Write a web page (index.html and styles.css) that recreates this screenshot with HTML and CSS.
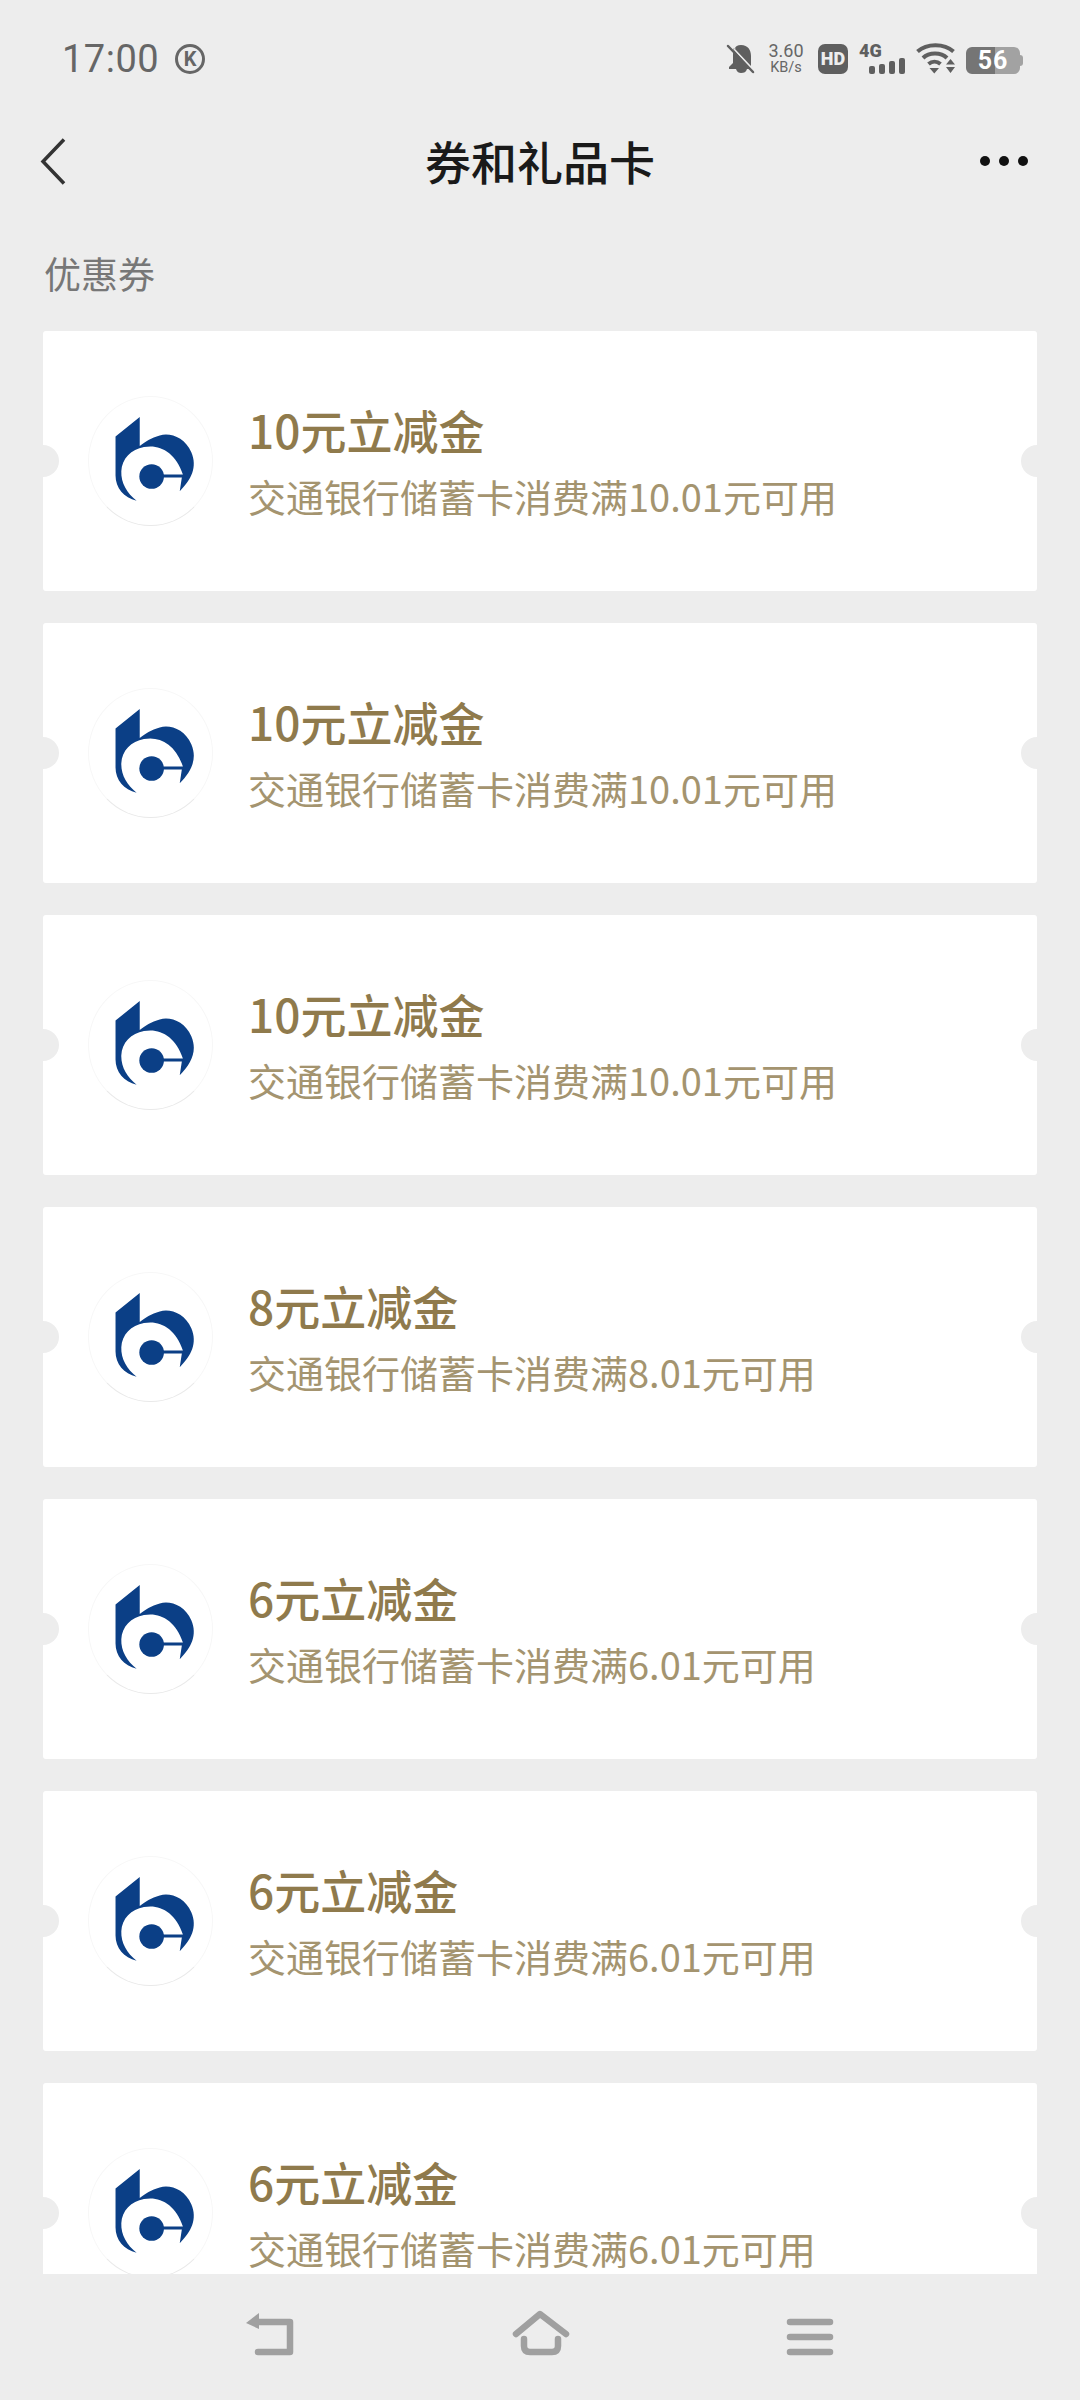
FILE: index.html
```html
<!DOCTYPE html>
<html lang="zh-CN">
<head>
    <meta charset="UTF-8">
    <title>券和礼品卡</title>
    <link rel="stylesheet" href="styles.css">
</head>
<body>
<svg class="defs" width="0" height="0">
    <symbol id="bankLogo" viewBox="0 0 95 95">
        <path fill="#0b3f86" d="M33 10.500 L10 29 V66 C10 78 18 87 30 90 C21 83 15 73 15.500 62 C16 50 25 41 37 39 C52 36 67 44 74 65 H50 V68 H73 L71 81 C82 70 88 58 82 44 C76 30 62 25 52 28 C44 30 38 34 33 38 Z"/>
        <circle fill="#0b3f86" cx="44.300" cy="67" r="11.700"/>
    </symbol>
</svg>

<div class="page">
    <!-- Status bar -->
    <div class="status-bar">
        <span class="time">17:00</span>
        <span class="k-badge">K</span>
        <div class="status-icons">
            <svg class="icon-bell" width="30" height="30" viewBox="0 0 30 30">
                <path fill="#5f5f5f" d="M15 1 C8 1 7 7 7 12 V19 L3 23 V25 H10 C11 28 13 29 15 29 C18 29 20 28 21 25 H25 L7 5 Z M9 5 L25 22 V12 C25 6 22 1 15 1 C12 1 10 3 9 5 Z"/>
                <path stroke="#5f5f5f" stroke-width="2.500" stroke-linecap="round" d="M2 2 L27 28"/>
            </svg>
            <div class="net-speed">
                <span class="speed-value">3.60</span>
                <span class="speed-unit">KB/s</span>
            </div>
            <span class="hd-badge">HD</span>
            <div class="signal">
                <span class="signal-label">4G</span>
                <div class="signal-bars">
                    <i class="bar-1"></i><i class="bar-2"></i><i class="bar-3"></i><i class="bar-4"></i>
                </div>
            </div>
            <svg class="icon-wifi" width="41" height="31" viewBox="0 0 41 31">
                <g fill="none" stroke="#5f5f5f" stroke-width="4">
                    <path d="M1.500 8.500 C11 0 28 0 37.500 8.500"/>
                    <path d="M7 15 C13 9 25 9 31 15"/>
                    <path d="M12.500 21 C16 18 21 18 24.500 21"/>
                </g>
                <path fill="#5f5f5f" d="M13.500 25 H23 L18.300 30.500 Z M30 21.500 L34.500 16 L39 21.500 Z M30 24 H39 L34.500 30 Z"/>
            </svg>
            <div class="battery">
                <span class="battery-level">56</span>
            </div>
        </div>
    </div>

    <!-- Title bar -->
    <div class="title-bar">
        <svg class="icon-back" width="26" height="47" viewBox="0 0 26 47">
            <path fill="none" stroke="#333" stroke-width="3.500" d="M24 1.500 L3 23.500 L24 45.500"/>
        </svg>
        <h1 class="title">券和礼品卡</h1>
        <div class="more"><i></i><i></i><i></i></div>
    </div>

    <div class="section-label">优惠券</div>

    <!-- Coupons -->
    <div class="coupon-list">
        <div class="coupon">
            <div class="coupon-logo"><svg class="logo-mark"><use href="#bankLogo"/></svg></div>
            <div class="coupon-text">
                <div class="coupon-name">10元立减金</div>
                <div class="coupon-desc">交通银行储蓄卡消费满10.01元可用</div>
            </div>
        </div>
        <div class="coupon">
            <div class="coupon-logo"><svg class="logo-mark"><use href="#bankLogo"/></svg></div>
            <div class="coupon-text">
                <div class="coupon-name">10元立减金</div>
                <div class="coupon-desc">交通银行储蓄卡消费满10.01元可用</div>
            </div>
        </div>
        <div class="coupon">
            <div class="coupon-logo"><svg class="logo-mark"><use href="#bankLogo"/></svg></div>
            <div class="coupon-text">
                <div class="coupon-name">10元立减金</div>
                <div class="coupon-desc">交通银行储蓄卡消费满10.01元可用</div>
            </div>
        </div>
        <div class="coupon">
            <div class="coupon-logo"><svg class="logo-mark"><use href="#bankLogo"/></svg></div>
            <div class="coupon-text">
                <div class="coupon-name">8元立减金</div>
                <div class="coupon-desc">交通银行储蓄卡消费满8.01元可用</div>
            </div>
        </div>
        <div class="coupon">
            <div class="coupon-logo"><svg class="logo-mark"><use href="#bankLogo"/></svg></div>
            <div class="coupon-text">
                <div class="coupon-name">6元立减金</div>
                <div class="coupon-desc">交通银行储蓄卡消费满6.01元可用</div>
            </div>
        </div>
        <div class="coupon">
            <div class="coupon-logo"><svg class="logo-mark"><use href="#bankLogo"/></svg></div>
            <div class="coupon-text">
                <div class="coupon-name">6元立减金</div>
                <div class="coupon-desc">交通银行储蓄卡消费满6.01元可用</div>
            </div>
        </div>
        <div class="coupon">
            <div class="coupon-logo"><svg class="logo-mark"><use href="#bankLogo"/></svg></div>
            <div class="coupon-text">
                <div class="coupon-name">6元立减金</div>
                <div class="coupon-desc">交通银行储蓄卡消费满6.01元可用</div>
            </div>
        </div>
    </div>

    <!-- Navigation bar -->
    <div class="nav-bar">
        <svg width="54" height="50" viewBox="0 0 54 50">
            <path fill="#a0a0a0" d="M3 15 L16 5 V21 Z"/>
            <path fill="none" stroke="#a0a0a0" stroke-width="6.500" stroke-linecap="round" stroke-linejoin="round" d="M14 14 H47 V44 H15"/>
        </svg>
        <svg width="64" height="50" viewBox="0 0 64 50">
            <path fill="none" stroke="#a0a0a0" stroke-width="6.500" stroke-linecap="round" stroke-linejoin="round" d="M7 26 L31 6 L57 26"/>
            <path fill="none" stroke="#a0a0a0" stroke-width="6.500" stroke-linecap="round" stroke-linejoin="round" d="M15 31 V38 Q15 44 21 44 H43 Q49 44 49 38 V31"/>
        </svg>
        <svg width="50" height="50" viewBox="0 0 50 50">
            <g fill="none" stroke="#a0a0a0" stroke-width="6.500" stroke-linecap="round">
                <path d="M5 14 H45"/>
                <path d="M5 29 H45"/>
                <path d="M5 44 H45"/>
            </g>
        </svg>
    </div>
</div>
</body>
</html>
```

FILE: styles.css
```css
* {
    box-sizing: border-box;
}

body {
    margin: 0;
    background: #ededed;
    font-family: "Noto Sans CJK SC", "Noto Sans", sans-serif;
}

.defs {
    display: block;
    height: 0;
}

.page {
    width: 1080px;
    height: 2400px;
    display: flex;
    flex-direction: column;
    overflow: hidden;
}

/* Status bar */
.status-bar {
    height: 119px;
    padding: 0 60px 2px 62px;
    display: flex;
    align-items: center;
    color: #666;
}

.time {
    font-family: Roboto, sans-serif;
    font-size: 38px;
    letter-spacing: 0.5px;
}

.k-badge {
    width: 30px;
    height: 30px;
    margin-left: 16px;
    border: 3.5px solid #666;
    border-radius: 50%;
    display: flex;
    align-items: center;
    justify-content: center;
    font-family: Roboto, sans-serif;
    font-size: 20px;
    font-weight: 700;
    line-height: 1;
}

.status-icons {
    margin-left: auto;
    display: flex;
    align-items: center;
}

.net-speed {
    width: 40px;
    margin-left: 10px;
    display: flex;
    flex-direction: column;
    align-items: center;
    font-family: Roboto, sans-serif;
    line-height: 1;
}

.speed-value {
    font-size: 18px;
}

.speed-unit {
    font-size: 14.500px;
    margin-top: 1px;
}

.hd-badge {
    width: 30px;
    height: 30px;
    margin-left: 12px;
    border-radius: 7px;
    background: #5f5f5f;
    color: #ededed;
    display: flex;
    align-items: center;
    justify-content: center;
    font-family: Roboto, sans-serif;
    font-size: 18px;
    font-weight: 900;
}

.signal {
    width: 46px;
    height: 30px;
    margin-left: 11px;
    position: relative;
}

.signal-label {
    position: absolute;
    left: 0;
    top: -3px;
    color: #5f5f5f;
    font-family: Roboto, sans-serif;
    font-size: 18px;
    font-weight: 900;
    line-height: 20px;
}

.signal-bars {
    position: absolute;
    right: 0;
    bottom: 0;
    display: flex;
    align-items: flex-end;
    gap: 4px;
}

.signal-bars i {
    width: 6px;
    border-radius: 2px;
    background: #5f5f5f;
}

.bar-1 {
    height: 8px;
}

.bar-2 {
    height: 10px;
}

.bar-3 {
    height: 13px;
}

.bar-4 {
    height: 16px;
}

.icon-wifi {
    margin-left: 11px;
}

.battery {
    width: 54px;
    height: 27px;
    margin-left: 9px;
    margin-top: 3px;
    border-radius: 6px;
    background: linear-gradient(to right, #757575 0, #757575 29px, #a2a2a2 29px, #a2a2a2 100%);
    display: flex;
    align-items: center;
    justify-content: center;
    position: relative;
}

.battery::after {
    content: "";
    position: absolute;
    right: -3px;
    top: 8px;
    width: 3px;
    height: 11px;
    border-radius: 0 3px 3px 0;
    background: #a2a2a2;
}

.battery-level {
    color: #fff;
    font-family: Roboto, sans-serif;
    font-size: 25px;
    font-weight: 700;
    letter-spacing: 1px;
    line-height: 1;
}

/* Title bar */
.title-bar {
    height: 84px;
    padding: 0 52px 0 40px;
    display: flex;
    align-items: center;
    justify-content: space-between;
    position: relative;
}

.title {
    position: absolute;
    left: 0;
    right: 0;
    margin: -2px 0 0;
    text-align: center;
    color: #1a1a1a;
    font-size: 46px;
    font-weight: 500;
    line-height: 60px;
}

.more {
    display: flex;
    gap: 9px;
}

.more i {
    width: 10px;
    height: 10px;
    border-radius: 50%;
    background: #111;
}

.section-label {
    padding: 45px 44px 33px;
    color: #777;
    font-size: 37px;
    line-height: 50px;
}

/* Coupons */
.coupon-list {
    flex: 1;
    min-height: 0;
    padding: 0 43px;
    display: flex;
    flex-direction: column;
    gap: 32px;
    overflow: hidden;
}

.coupon {
    flex: none;
    height: 260px;
    padding: 0 45px;
    display: flex;
    align-items: center;
    gap: 35px;
    border-radius: 3px;
    background: #fff;
    position: relative;
    overflow: hidden;
}

.coupon::before,
.coupon::after {
    content: "";
    position: absolute;
    top: 114px;
    width: 32px;
    height: 32px;
    border-radius: 50%;
    background: #ededed;
}

.coupon::before {
    left: -16px;
}

.coupon::after {
    right: -16px;
}

.coupon-logo {
    flex: none;
    width: 125px;
    height: 130px;
    border: 1px solid #f7f7f7;
    border-bottom-color: #e9e9e9;
    border-radius: 50%;
    display: flex;
    align-items: center;
    justify-content: center;
}

.logo-mark {
    width: 100px;
    height: 100px;
    margin: -10px 0 0 9px;
}

.coupon-name {
    color: #8f7a4c;
    font-size: 46px;
    font-weight: 500;
    line-height: 60px;
}

.coupon-desc {
    margin-top: 9px;
    color: #a4946f;
    font-size: 38px;
    line-height: 56px;
}

/* Navigation bar */
.nav-bar {
    height: 126px;
    flex: none;
    padding: 34px 245px 0 243px;
    display: flex;
    align-items: flex-start;
    justify-content: space-between;
    background: #ededed;
}
```
